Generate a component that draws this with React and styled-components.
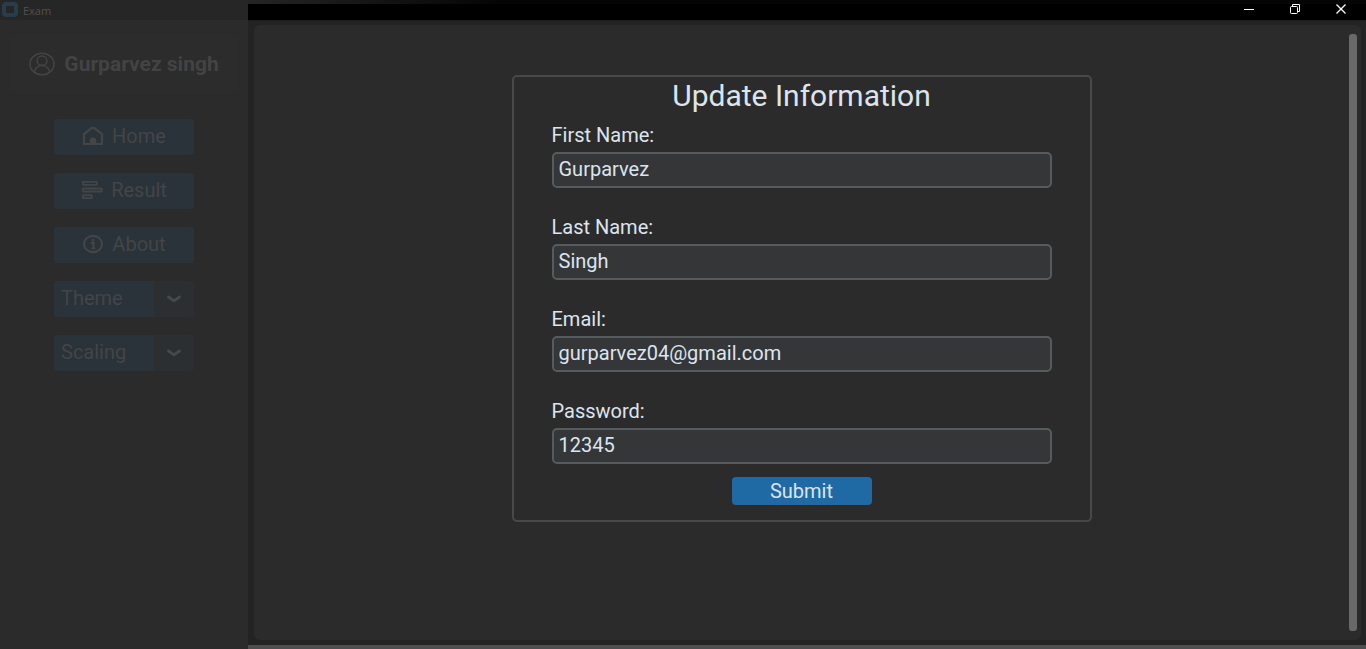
import React from "react";
import styled, { createGlobalStyle } from "styled-components";

const GlobalStyle = createGlobalStyle`
  *, *::before, *::after { box-sizing: border-box; }
  body {
    margin: 0;
    background: #232323;
    font-family: Roboto, "Liberation Sans", sans-serif;
  }
  button, input, select { font: inherit; margin: 0; }
`;

const Window = styled.div`
  display: flex;
  min-height: 100vh;
`;

const Sidebar = styled.aside`
  flex: 0 0 248px;
  display: flex;
  flex-direction: column;
  background: #2b2b2b;
  color: #434343;
`;

const AppTitle = styled.div`
  display: flex;
  align-items: center;
  gap: 5px;
  height: 20px;
  padding-left: 2px;
  background: #262626;
  font-family: "Open Sans", sans-serif;
  font-size: 11px;
  color: #505050;
`;

const UserHeader = styled.header`
  display: flex;
  align-items: center;
  justify-content: center;
  gap: 9px;
  height: 54px;
  margin: 17px 10px 0;
  background: #2c2c2c;
  font-size: 21px;
  font-weight: 700;
  line-height: 24px;
`;

const Menu = styled.nav`
  display: flex;
  flex-direction: column;
  align-items: center;
  gap: 18px;
  margin-top: 28px;
`;

const MenuButton = styled.button`
  display: flex;
  align-items: center;
  justify-content: center;
  gap: 8px;
  width: 140px;
  height: 36px;
  padding: 0 0 2px;
  border: 0;
  border-radius: 4px;
  background: #2a323a;
  color: #434547;
  font-size: 20px;
`;

const Dropdown = styled.div`
  display: grid;
  grid-template-columns: 100px 40px;
  align-items: center;
  width: 140px;
  height: 36px;
  border-radius: 4px;
  background: linear-gradient(to right, #2a323a 100px, #2b2f32 100px);
  color: #46484a;

  svg {
    grid-area: 1 / 2;
    justify-self: center;
    pointer-events: none;
  }
`;

const DropdownSelect = styled.select`
  grid-area: 1 / 1 / 2 / 3;
  height: 36px;
  padding: 0 40px 2px 7px;
  border: 0;
  appearance: none;
  background: transparent;
  color: #434547;
  font-size: 20px;
`;

const Main = styled.main`
  flex: 1;
  min-width: 0;
  display: flex;
  flex-direction: column;
  background: #232323;
  border-bottom: 4px solid #4c4e50;
`;

const TitleBar = styled.div`
  display: flex;
  justify-content: flex-end;
  height: 21px;
  padding-right: 2px;
  border-bottom: 1px solid #1c1c1c;
  background: linear-gradient(to right, #252525, #050505 250px) 0 0 / 100% 4px no-repeat #000;
`;

const WindowButton = styled.button`
  display: grid;
  place-items: center;
  width: 46px;
  height: 18px;
  padding: 0;
  border: 0;
  background: transparent;
  color: #fff;
`;

const ScrollPane = styled.section`
  flex: 1;
  display: flex;
  margin: 4px 5px 5px 6px;
  padding: 9px 4px 9px 0;
  border-radius: 6px;
  background: #2b2b2b;
`;

const PaneContent = styled.div`
  flex: 1;
  min-width: 0;
  padding-top: 41px;
`;

const ScrollThumb = styled.div`
  flex: 0 0 8px;
  border-radius: 3px;
  background: #696969;
`;

const Card = styled.form`
  display: flex;
  flex-direction: column;
  align-items: center;
  max-width: 580px;
  margin: 0 auto;
  padding: 0 38px 15px;
  border: 2px solid #484848;
  border-radius: 5px;
  color: #dce4ee;
`;

const CardTitle = styled.h1`
  margin: 0 0 8px;
  font-size: 30px;
  font-weight: 400;
  line-height: 38px;
`;

const Field = styled.div`
  display: flex;
  flex-direction: column;
  gap: 5px;
  width: 100%;
  margin-bottom: ${(p) => (p.$last ? 13 : 27)}px;
`;

const Label = styled.label`
  font-size: 20px;
  line-height: 24px;
`;

const TextInput = styled.input`
  width: 100%;
  height: 36px;
  padding: 0 5px 2px;
  border: 2px solid #565b5e;
  border-radius: 5px;
  background: #343638;
  color: #dce4ee;
  font-size: 20px;
`;

const SubmitButton = styled.button`
  width: 140px;
  height: 28px;
  padding: 0;
  border: 0;
  border-radius: 4px;
  background: #1f6aa5;
  color: #dce4ee;
  font-size: 20px;
  line-height: 28px;
`;

const AppLogo = () => (
  <svg width="16" height="16" viewBox="0 0 16 16" aria-hidden="true">
    <rect x="2" y="2" width="12" height="11" rx="2" fill="none" stroke="#273d4c" strokeWidth="4" />
  </svg>
);

const UserIcon = () => (
  <svg width="26" height="24" viewBox="0 0 26 24" fill="none" stroke="currentColor" strokeWidth="1.5" aria-hidden="true">
    <ellipse cx="13" cy="12" rx="12" ry="10.8" />
    <ellipse cx="13" cy="8.7" rx="4.9" ry="4.6" />
    <path d="M5.3 19.7C6.5 15.5 9.2 13.4 13 13.4s6.500 2.100 7.700 6.300" />
  </svg>
);

const HomeIcon = () => (
  <svg width="22" height="20" viewBox="0 0 22 20" fill="none" aria-hidden="true">
    <path d="M2 8.200 9.500 2.200h3L20 8.200V18H2Z" stroke="currentColor" strokeWidth="2.200" strokeLinejoin="round" />
    <path d="M7.800 18v-3.500a3.200 3 0 0 1 6.400 0V18Z" fill="currentColor" />
  </svg>
);

const ResultIcon = () => (
  <svg width="22" height="20" viewBox="0 0 22 20" fill="none" stroke="currentColor" strokeWidth="1.800" aria-hidden="true">
    <rect x="1.800" y="1.800" width="14" height="3" rx=".5" />
    <rect x="1.800" y="8.500" width="19" height="3" rx=".8" />
    <rect x="1.800" y="15.200" width="9" height="3" rx=".5" />
  </svg>
);

const InfoIcon = () => (
  <svg width="22" height="20" viewBox="0 0 22 20" fill="none" aria-hidden="true">
    <ellipse cx="11" cy="10" rx="9" ry="8.200" stroke="currentColor" strokeWidth="2.200" />
    <circle cx="11" cy="6" r="1.500" fill="currentColor" />
    <path d="M9 9h2.500v5M9.200 14.200h4" stroke="currentColor" strokeWidth="2" />
  </svg>
);

const Chevron = () => (
  <svg width="14" height="8" viewBox="0 0 14 8" fill="none" aria-hidden="true">
    <path d="M1.500 2 7 5.800 12.500 2" stroke="currentColor" strokeWidth="2.800" strokeLinecap="round" strokeLinejoin="round" />
  </svg>
);

const MinimizeIcon = () => (
  <svg width="10" height="10" viewBox="0 0 10 10" aria-hidden="true">
    <path d="M0 5.500h10" stroke="currentColor" />
  </svg>
);

const RestoreIcon = () => (
  <svg width="10" height="10" viewBox="0 0 10 10" fill="none" stroke="currentColor" aria-hidden="true">
    <rect x=".5" y="2.500" width="7" height="7" rx="1" />
    <path d="M2.500 2.500V.5h7v7h-2" />
  </svg>
);

const CloseIcon = () => (
  <svg width="10" height="10" viewBox="0 0 10 10" aria-hidden="true">
    <path d="m.5.5 9 9m0-9-9 9" stroke="currentColor" strokeWidth="1.300" />
  </svg>
);

const menuItems = [
  { text: "Home", Icon: HomeIcon },
  { text: "Result", Icon: ResultIcon },
  { text: "About", Icon: InfoIcon },
];

const windowButtons = [
  { text: "Minimize", Icon: MinimizeIcon },
  { text: "Restore", Icon: RestoreIcon },
  { text: "Close", Icon: CloseIcon },
];

const fields = [
  { id: "first-name", text: "First Name:", value: "Gurparvez" },
  { id: "last-name", text: "Last Name:", value: "Singh" },
  { id: "email", text: "Email:", value: "gurparvez04@gmail.com" },
  { id: "password", text: "Password:", value: "12345" },
];

export default function App() {
  return (
    <>
      <GlobalStyle />
      <Window>
        <Sidebar>
          <AppTitle>
            <AppLogo />
            Exam
          </AppTitle>
          <UserHeader>
            <UserIcon />
            Gurparvez singh
          </UserHeader>
          <Menu>
            {menuItems.map(({ text, Icon }) => (
              <MenuButton key={text} type="button">
                <Icon />
                {text}
              </MenuButton>
            ))}
            {["Theme", "Scaling"].map((text) => (
              <Dropdown key={text}>
                <DropdownSelect aria-label={text}>
                  <option>{text}</option>
                </DropdownSelect>
                <Chevron />
              </Dropdown>
            ))}
          </Menu>
        </Sidebar>
        <Main>
          <TitleBar>
            {windowButtons.map(({ text, Icon }) => (
              <WindowButton key={text} type="button" aria-label={text}>
                <Icon />
              </WindowButton>
            ))}
          </TitleBar>
          <ScrollPane>
            <PaneContent>
              <Card onSubmit={(e) => e.preventDefault()}>
                <CardTitle>Update Information</CardTitle>
                {fields.map((f, i) => (
                  <Field key={f.id} $last={i === fields.length - 1}>
                    <Label htmlFor={f.id}>{f.text}</Label>
                    <TextInput id={f.id} type="text" defaultValue={f.value} />
                  </Field>
                ))}
                <SubmitButton type="submit">Submit</SubmitButton>
              </Card>
            </PaneContent>
            <ScrollThumb />
          </ScrollPane>
        </Main>
      </Window>
    </>
  );
}
